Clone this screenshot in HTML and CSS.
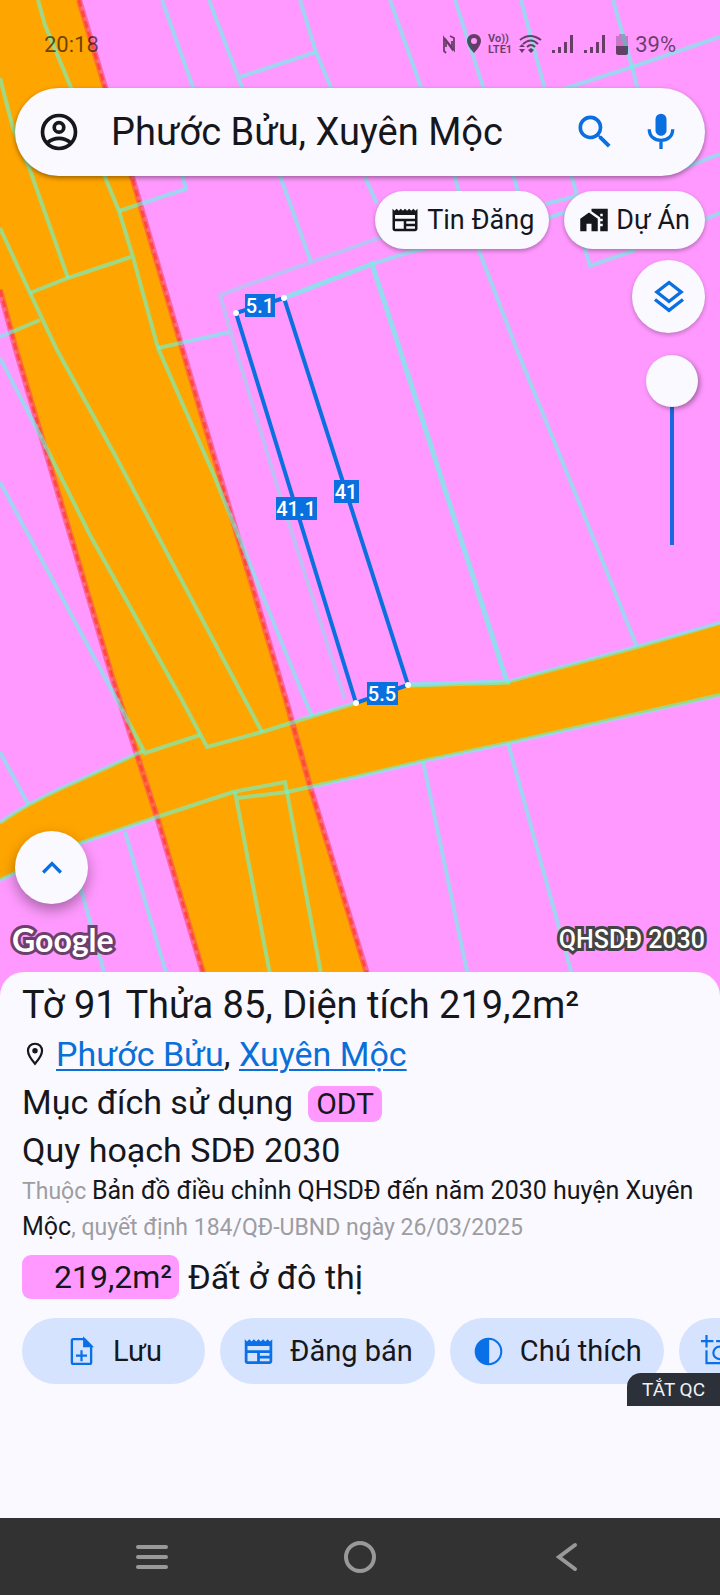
FILE: index.html
```html
<!DOCTYPE html>
<html lang="vi">
<head>
  <meta charset="UTF-8" />
  <title>Bản đồ quy hoạch | Phước Bửu, Xuyên Mộc</title>
  <meta name="viewport" content="width=device-width, initial-scale=1.0" />
  <link rel="stylesheet" href="styles.css">
</head>
<body>
  <main class="map">
    <svg class="map-canvas" viewBox="0 0 720 1000" preserveAspectRatio="xMidYMin slice" aria-hidden="true">
      <rect width="720" height="1000" fill="#ff99ff"/>

      <!-- đường giao thông -->
      <path class="road" d="M0 0H79L105 87L133 180L182 348L286 700L310 786L375 1000H211L157 817L113 680L16 350L0 290Z"/>
      <path class="road" d="M0 823Q25 804 80 780L143 751L207 740L313 716L356 703L408 686L507 682L637 647L720 624V696L508 743L423 761L287 793L233 792L157 817L80 843L0 880Z"/>
      <path class="edge" d="M79 0L105 87L133 180L182 348L286 700L310 786L375 1000"/>
      <path class="edge" d="M0 290L16 350L113 680L157 817L211 1000"/>
      <path class="edge dots" d="M79 0L105 87L133 180L182 348L286 700L310 786L375 1000"/>
      <path class="edge dots" d="M0 290L16 350L113 680L157 817L211 1000"/>

      <!-- ranh thửa -->
      <g class="parcel">
        <path d="M38 0L45 25L72 90L105 177L119 211L133 257L158 348L213 473L247 557L305 700L312 716"/>
        <path d="M0 78L13 128L30 170L68 278"/>
        <path d="M0 228L30 293L57 350L115 455L245 700L262 732"/>
        <path d="M30 293L68 278L131 257"/>
        <path d="M0 337L40 320"/>
        <path d="M119 211L186 189L181 170"/>
        <path d="M158 348L230 332"/>
        <path d="M0 358L40 435L90 535L182 700L207 747L262 732L313 716L356 703"/>
        <path d="M0 482L117 700L145 753L200 735"/>
        <path d="M0 752L28 804"/>
        <path d="M0 823Q25 804 80 780L143 751"/>
        <path d="M162 0L194 90"/>
        <path d="M209 0L243 90"/>
        <path d="M240 77L316 52"/>
        <path d="M300 0L316 52L332 90"/>
        <path d="M278 170L311 262"/>
        <path d="M390 0L422 90"/>
        <path d="M455 0L484 90"/>
        <path d="M521 0L545 90"/>
        <path d="M613 0L632 67L638 90"/>
        <path d="M560 90L632 67L720 37"/>
        <path d="M365 177L377 204"/>
        <path d="M453 170L459 192"/>
        <path d="M512 170L518 192"/>
        <path d="M570 170L577 196L545 204"/>
        <path d="M680 169L720 154"/>
        <path d="M545 219L575 209"/>
        <path d="M703 220L720 213"/>
        <path d="M584 245L590 266L635 250"/>
        <path d="M372 264L410 252L440 245"/>
        <path d="M478 248L517 350L580 505L637 647"/>
        <path d="M507 682L637 647L720 623"/>
        <path d="M0 880L80 843L157 817L233 792L285 782L287 792"/>
        <path d="M238 798L287 792L360 776L423 761L508 743L720 695"/>
        <path d="M235 792L275 1000"/>
        <path d="M287 792L326 1000"/>
        <path d="M423 761L473 1000"/>
        <path d="M508 743L579 1000"/>
        <path d="M125 832L174 1000"/>
        <path d="M70 850L112 1000"/>
      </g>
      <path class="parcel soft" d="M385 236L311 262L220 295L236 350L280 495L345 700"/>
      <path class="parcel strong" d="M284 298L372 264L400 350L507 682L408 685"/>

      <!-- thửa đang chọn -->
      <path class="selected" d="M236 313L284 298L408 685L356 703Z"/>
      <g fill="#fff">
        <circle cx="236" cy="313" r="3"/>
        <circle cx="284" cy="298" r="3"/>
        <circle cx="408" cy="685" r="3"/>
        <circle cx="356" cy="703" r="3"/>
      </g>
      <g class="measure">
        <rect x="245" y="294" width="30" height="23"/><text x="260" y="313">5.1</text>
        <rect x="276" y="497" width="41" height="23"/><text x="296" y="516">41.1</text>
        <rect x="334" y="480" width="25" height="23"/><text x="346" y="499">41</text>
        <rect x="367" y="682" width="31" height="23"/><text x="382" y="701">5.5</text>
      </g>
    </svg>

    <div class="status">
      <span class="clock">20:18</span>
      <div class="status-icons">
        <svg width="14" height="22" viewBox="0 0 14 22" fill="none" stroke="currentColor" stroke-width="1.800"><path d="M4 20L2 18V5L10 16V8M8 3L12 5V17L4 7V14"/></svg>
        <svg class="pin" width="16" height="22" viewBox="0 0 16 22"><path fill="currentColor" fill-rule="evenodd" d="M8 1C4 1 1 4 1 8c0 5 7 12 7 12s7-7 7-12c0-4-3-7-7-7zm0 4a3 3 0 1 1 0 6a3 3 0 0 1 0-6z"/></svg>
        <span class="volte"><span>Vo))</span><span>LTE1</span></span>
        <svg width="24" height="22" viewBox="0 0 24 22" fill="none" stroke="currentColor" stroke-width="2"><path d="M2 7Q12-1 23 7M5 11Q13 4 20 11M9 14Q13 10 17 14"/><path fill="currentColor" stroke="none" d="M10 17L13 20L16 17L13 15ZM1 14L4 11L7 14ZM1 16H7L4 20Z"/></svg>
        <svg class="bars" width="22" height="20" viewBox="0 0 22 20"><path fill="currentColor" d="M0 16h3v3H0zM6 13h3v6H6zM12 8h3v11h-3zM18 1h3v18h-3z"/></svg>
        <svg class="bars" width="22" height="20" viewBox="0 0 22 20"><path fill="currentColor" d="M0 16h3v3H0zM6 13h3v6H6zM12 8h3v11h-3zM18 1h3v18h-3z"/></svg>
        <svg width="12" height="22" viewBox="0 0 12 22"><path fill="currentColor" opacity=".35" d="M3 1H9V3H12V13H0V3H3Z"/><path fill="currentColor" d="M0 13H12V20Q12 22 10 22H2Q0 22 0 20Z"/></svg>
        <span class="percent">39%</span>
      </div>
    </div>

    <form class="search" role="search">
      <button type="button" class="icon-btn dark" aria-label="Tài khoản">
        <svg viewBox="0 0 24 24" fill="none" stroke="currentColor" stroke-width="2"><circle cx="12" cy="12" r="9"/><circle cx="12" cy="9.500" r="2.600"/><path d="M5.500 18Q8.500 15.500 12 15.500T18.500 18"/></svg>
      </button>
      <input type="text" value="Phước Bửu, Xuyên Mộc" aria-label="Tìm kiếm">
      <button type="submit" class="icon-btn" aria-label="Tìm">
        <svg viewBox="0 0 24 24" fill="currentColor"><path d="M15.500 14h-.79l-.28-.27A6.470 6.470 0 0 0 16 9.500 6.500 6.500 0 1 0 9.500 16c1.610 0 3.090-.59 4.230-1.570l.27.28v.79l5 4.990L20.490 19l-4.990-5zm-6 0C7.010 14 5 11.990 5 9.500S7.010 5 9.500 5 14 7.010 14 9.500 11.990 14 9.500 14z"/></svg>
      </button>
      <button type="button" class="icon-btn" aria-label="Giọng nói">
        <svg viewBox="0 0 24 24" fill="none" stroke="currentColor" stroke-width="1.800"><path fill="currentColor" stroke="none" d="M12 14c1.700 0 3-1.300 3-3V5a3 3 0 0 0-6 0v6c0 1.700 1.300 3 3 3z"/><path d="M5.600 10.500C5.600 14.500 8.500 16.600 12 16.600S18.400 14.500 18.400 10.500M12 16.600V21.300"/></svg>
      </button>
    </form>

    <div class="chips">
      <button type="button">
        <svg viewBox="0 0 24 24" fill="currentColor"><path d="M22 3l-1.670 1.670L18.670 3 17 4.670 15.330 3l-1.660 1.670L12 3l-1.670 1.670L8.670 3 7 4.670 5.330 3 3.670 4.670 2 3v16c0 1.100.9 2 2 2h16c1.100 0 2-.9 2-2V3zM11 19H4v-6h7v6zm9 0h-7v-2h7v2zm0-4h-7v-2h7v2zm0-4H4V8h16v3z"/></svg>
        Tin Đăng
      </button>
      <button type="button">
        <svg viewBox="0 0 24 24" fill="currentColor"><path d="M1 11v10h5v-6h4v6h5V11L8 6l-7 5z"/><path d="M10 3v1.970l7 5V11h2v2h-2v2h2v2h-2v4h6V3H10zm9 6h-2V7h2v2z"/></svg>
        Dự Án
      </button>
    </div>

    <div class="tools">
      <button type="button" class="round" aria-label="Lớp bản đồ">
        <svg viewBox="0 0 24 24" fill="none" stroke="currentColor" stroke-width="2"><path d="M12 3.300L19.300 9L12 14.700L4.700 9ZM3.600 13.500L12 20L20.400 13.500"/></svg>
      </button>
      <input class="opacity" type="range" min="0" max="100" value="0" aria-label="Độ mờ lớp quy hoạch">
    </div>

    <div class="map-foot">
      <button type="button" class="round raised" aria-label="Mở rộng">
        <svg viewBox="0 0 24 24" fill="none" stroke="currentColor" stroke-width="2"><path d="M6.700 14.700L12 9.400L17.300 14.700"/></svg>
      </button>
      <div class="credits">
        <span class="google">Google</span>
        <span class="layer-name">QHSDĐ 2030</span>
      </div>
    </div>
  </main>

  <section class="sheet">
    <h1>Tờ 91 Thửa 85, Diện tích 219,2m²</h1>
    <p class="row place">
      <svg viewBox="0 0 24 24" fill="none" stroke="currentColor" stroke-width="2"><path d="M12 2.500C8 2.500 5.500 5.500 5.500 9c0 4.500 6.500 12 6.500 12s6.500-7.500 6.500-12c0-3.500-2.500-6.500-6.500-6.500z"/><circle cx="12" cy="9" r="2.500" fill="currentColor" stroke="none"/></svg>
      <span><a href="#">Phước Bửu</a>, <a href="#">Xuyên Mộc</a></span>
    </p>
    <p class="row">Mục đích sử dụng <span class="code">ODT</span></p>
    <h2 class="row">Quy hoạch SDĐ 2030</h2>
    <p class="note">Thuộc <b>Bản đồ điều chỉnh QHSDĐ đến năm 2030 huyện Xuyên Mộc</b>, quyết định 184/QĐ-UBND ngày 26/03/2025</p>
    <p class="land"><span class="area">219,2m²</span> Đất ở đô thị</p>

    <div class="actions">
      <button type="button">
        <svg viewBox="0 0 24 24" fill="none" stroke="currentColor" stroke-width="1.700"><path d="M14 3H6Q5 3 5 4V20Q5 21 6 21H18Q19 21 19 20V8Z"/><path d="M14 3V8H19Z" fill="currentColor"/><path d="M12 11V19M8 15H16" stroke-width="1.600"/></svg>
        Lưu
      </button>
      <button type="button">
        <svg viewBox="0 0 24 24" fill="currentColor"><path d="M22 3l-1.670 1.670L18.670 3 17 4.670 15.330 3l-1.660 1.670L12 3l-1.670 1.670L8.670 3 7 4.670 5.330 3 3.670 4.670 2 3v16c0 1.100.9 2 2 2h16c1.100 0 2-.9 2-2V3zM11 19H4v-6h7v6zm9 0h-7v-2h7v2zm0-4h-7v-2h7v2zm0-4H4V8h16v3z"/></svg>
        Đăng bán
      </button>
      <button type="button">
        <svg viewBox="0 0 24 24"><circle cx="12" cy="12" r="9.300" fill="none" stroke="currentColor" stroke-width="1.500"/><path fill="currentColor" d="M12.500 2.500A9.500 9.500 0 0 0 12.500 21.500Z"/></svg>
        Chú thích
      </button>
      <button type="button" class="photo" aria-label="Chụp ảnh">
        <svg viewBox="0 0 24 24" fill="none" stroke="currentColor" stroke-width="1.600"><path d="M4 0V9M0 4.500H9M11 4.500H17L19 6.500H23M4 11V20.500H23V6"/><circle cx="13.500" cy="13" r="4.500"/></svg>
      </button>
    </div>

    <div class="ad">
      <button type="button">TẮT QC</button>
    </div>
  </section>

  <nav class="navbar">
    <button type="button" aria-label="Gần đây"><svg viewBox="0 0 36 36"><path d="M4 8H32M4 18H32M4 28H32"/></svg></button>
    <button type="button" aria-label="Trang chủ"><svg viewBox="0 0 36 36"><circle cx="18" cy="18" r="14"/></svg></button>
    <button type="button" aria-label="Quay lại"><svg viewBox="0 0 36 36"><path d="M25 6L9 18L25 30"/></svg></button>
  </nav>
</body>
</html>
```

FILE: styles.css
```css
* {
  box-sizing: border-box;
}
body {
  margin: 0;
  min-height: 100vh;
  display: flex;
  flex-direction: column;
  overflow-x: hidden;
  font-family: Roboto, "Noto Sans", sans-serif;
  background: #faf9ff;
  color: #15171c;
}
h1, h2, p {
  margin: 0;
  font-weight: normal;
}
button, input {
  font-family: inherit;
  color: inherit;
}
button {
  border: none;
  padding: 0;
  background: none;
  cursor: pointer;
}
svg {
  display: block;
  flex-shrink: 0;
}

/* map */
.map {
  position: relative;
  flex: 1;
  min-height: 860px;
  display: flex;
  flex-direction: column;
  padding: 0 15px 36px;
}
.map-canvas {
  position: absolute;
  top: 0;
  left: 0;
  width: 100%;
  height: 100%;
  z-index: -1;
}
.road {
  fill: #ffa500;
}
.edge {
  fill: none;
  stroke: #ff4466;
  stroke-opacity: 0.6;
  stroke-width: 6;
}
.dots {
  stroke: #ff3322;
  stroke-width: 3;
  stroke-dasharray: 7 4;
}
.parcel {
  fill: none;
  stroke: #5cffe4;
  stroke-opacity: 0.57;
  stroke-width: 4;
}
.soft {
  stroke: #8fdcf0;
}
.strong {
  stroke-width: 5;
  stroke-opacity: 0.65;
}
.selected {
  fill: none;
  stroke: #0a70e0;
  stroke-width: 4;
}
.measure rect {
  fill: #0a70e0;
}
.measure text {
  fill: #fff;
  font-size: 20px;
  font-weight: 500;
  text-anchor: middle;
}

/* status bar */
.status {
  height: 88px;
  display: flex;
  align-items: center;
  justify-content: space-between;
  padding: 0 29px;
  font-size: 22px;
  color: rgba(0, 0, 0, 0.6);
}
.status-icons {
  display: flex;
  align-items: center;
  gap: 10px;
}
.volte {
  display: flex;
  flex-direction: column;
  margin: 0 -4px;
  font-size: 11px;
  font-weight: bold;
  line-height: 11px;
}
.percent {
  margin-left: -3px;
}

/* search */
.search {
  height: 88px;
  display: flex;
  align-items: center;
  gap: 22px;
  padding: 0 22px;
  border-radius: 44px;
  background: #faf9ff;
  box-shadow: 0 2px 5px rgba(0, 0, 0, 0.4);
}
.search input {
  flex: 1;
  min-width: 0;
  height: 60px;
  border: none;
  padding: 0 8px;
  outline: none;
  background: none;
  font-size: 38px;
}
.icon-btn {
  color: #0a6fe0;
}
.icon-btn svg {
  width: 44px;
  height: 44px;
}
.dark {
  color: #15171c;
}

.chips {
  display: flex;
  justify-content: flex-end;
  gap: 15px;
  margin-top: 15px;
}
.chips button {
  height: 58px;
  display: flex;
  align-items: center;
  gap: 7px;
  padding: 0 15px;
  border-radius: 29px;
  background: #faf9ff;
  box-shadow: 0 2px 4px rgba(0, 0, 0, 0.3);
  font-size: 27px;
}
.chips svg {
  width: 30px;
  height: 30px;
}

.tools {
  display: flex;
  flex-direction: column;
  align-items: flex-end;
  gap: 22px;
  margin-top: 11px;
}
.round {
  width: 73px;
  height: 73px;
  display: flex;
  align-items: center;
  justify-content: center;
  border-radius: 50%;
  background: #faf9ff;
  box-shadow: 0 2px 4px rgba(0, 0, 0, 0.25);
  color: #0a6fe0;
}
.round svg {
  width: 40px;
  height: 40px;
}
.raised {
  box-shadow: 0 6px 14px rgba(0, 0, 0, 0.35);
}
.opacity {
  appearance: none;
  writing-mode: vertical-lr;
  width: 52px;
  height: 190px;
  margin: 0 7px 0 0;
  background: linear-gradient(#1a68dc, #1a68dc) center / 4px 100% no-repeat;
}
.opacity::-webkit-slider-thumb {
  appearance: none;
  width: 52px;
  height: 52px;
  border-radius: 50%;
  background: #faf9ff;
  box-shadow: 2px 2px 5px rgba(0, 0, 0, 0.35);
}

.map-foot {
  margin-top: auto;
}
.credits {
  display: flex;
  align-items: center;
  justify-content: space-between;
  height: 38px;
  margin: 16px 0 2px -3px;
  color: #fff;
  -webkit-text-stroke: 6px #444;
  paint-order: stroke fill;
}
.google {
  font-family: Lato, sans-serif;
  font-size: 32px;
  font-weight: bold;
  -webkit-text-stroke-color: #6c3f6c;
}
.layer-name {
  font-size: 25px;
  font-weight: 500;
}

/* parcel info */
.sheet {
  position: relative;
  margin-top: -24px;
  padding: 8px 22px 0;
  border-radius: 24px 24px 0 0;
  background: #faf9ff;
}
.sheet h1 {
  font-size: 38px;
  line-height: 50px;
}
.row {
  display: flex;
  align-items: center;
  font-size: 34px;
  line-height: 48px;
}
.place {
  gap: 8px;
}
.place svg {
  width: 26px;
  height: 26px;
}
.sheet a {
  color: #0a70d8;
  text-decoration-thickness: 2px;
  text-underline-offset: 3px;
}
.code {
  margin: 3px 0 0 15px;
  padding: 0 8px;
  border-radius: 9px;
  background: #ff99ff;
  font-size: 30px;
  line-height: 36px;
}
.note {
  font-size: 23px;
  line-height: 36px;
  color: #9d9da2;
}
.note b {
  font-size: 25px;
  font-weight: normal;
  line-height: 30px;
  color: #15171c;
}
.land {
  display: flex;
  align-items: center;
  gap: 9px;
  margin-top: 9px;
  font-size: 34px;
  line-height: 44px;
}
.area {
  min-width: 157px;
  padding: 0 7px;
  border-radius: 9px;
  background: #ff99ff;
  font-size: 32px;
  text-align: right;
}

.actions {
  display: flex;
  gap: 15px;
  margin: 19px -22px 0 0;
  overflow: hidden;
}
.actions button {
  flex-shrink: 0;
  min-width: 183px;
  height: 66px;
  display: flex;
  align-items: center;
  justify-content: center;
  gap: 15px;
  padding: 0 22px;
  border-radius: 33px;
  background: #d6e3ff;
  font-size: 29px;
  white-space: nowrap;
}
.actions .photo {
  justify-content: flex-start;
}
.actions svg {
  width: 33px;
  height: 33px;
  color: #0a70e8;
}

.ad {
  position: relative;
  height: 134px;
  margin: 0 -22px;
}
.ad button {
  position: absolute;
  top: -11px;
  right: 0;
  height: 33px;
  padding: 0 15px;
  border-radius: 14px 0 0 0;
  background: #2c3038;
  color: #eef0f6;
  font-size: 19px;
}

.navbar {
  height: 77px;
  display: flex;
  padding: 0 48px;
  background: #323232;
}
.navbar button {
  flex: 1;
  display: flex;
  align-items: center;
  justify-content: center;
}
.navbar svg {
  width: 36px;
  height: 36px;
  fill: none;
  stroke: #999;
  stroke-width: 4;
  stroke-linecap: round;
}
```
